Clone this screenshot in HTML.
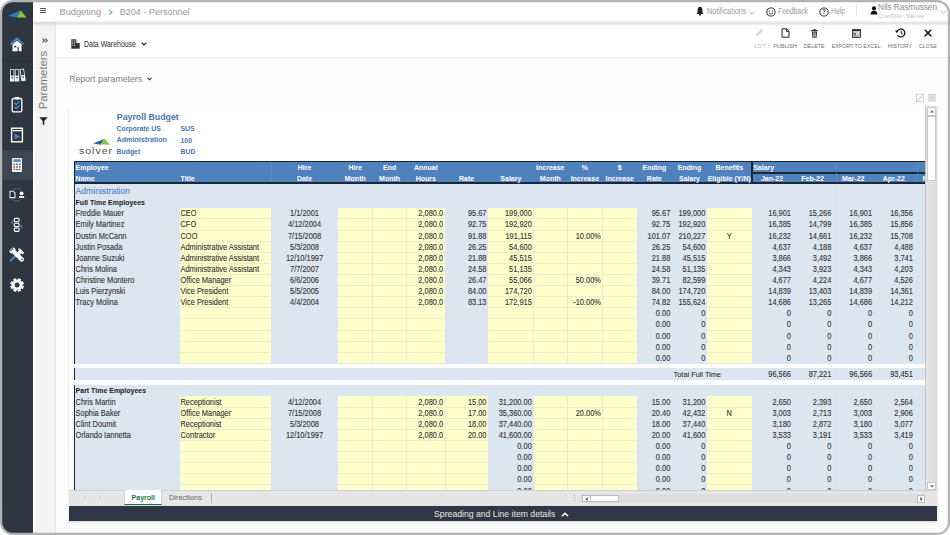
<!DOCTYPE html><html><head><meta charset="utf-8"><style>
*{margin:0;padding:0;box-sizing:border-box}
html,body{width:950px;height:535px;overflow:hidden;background:#fff;font-family:"Liberation Sans", sans-serif}
.ab{position:absolute}
.t{position:absolute;white-space:nowrap;line-height:1}
svg{position:absolute;overflow:visible}
.g{-webkit-text-stroke:0.1px currentColor;transform:scaleY(1.1);transform-origin:0 6.3px}
.gb{font-weight:bold;transform:scaleY(1.1)}
</style></head><body>
<div class="ab" style="left:1px;top:1px;width:948px;height:533px;border-radius:12px;overflow:hidden;background:#fdfdfd">
<div class="ab" style="left:-1px;top:-1px;width:950px;height:535px">
<div class="ab" style="left:0;top:0;width:33.6px;height:535px;background:#2e3641;border-right:0.6px solid #1f252d"></div>
<div class="ab" style="left:0;top:150px;width:33px;height:30px;background:#3d4753"></div>
<div class="ab" style="left:0;top:59.5px;width:33px;height:1px;background:#28303a"></div>
<svg style="left:0;top:0" width="33" height="30"><polygon points="8,16 20,10.5 17.3,17.5" fill="#2f7bbf"/><polygon points="17.3,17.5 20.5,10.3 26.5,17.5" fill="#8cc63f"/></svg>
<svg style="left:9px;top:37px" width="16" height="15" viewBox="0 0 16 15">
<polyline points="1.5,7.5 8,1.5 14.5,7.5" fill="none" stroke="#4a86c5" stroke-width="1.8"/>
<path d="M3.5,7.5 L8,3.4 L12.5,7.5 L12.5,14.3 L9.8,14.3 L9.8,10 L8.6,10 L8.6,14.3 L3.5,14.3 Z" fill="#fff"/>
<rect x="4.8" y="9" width="2.6" height="1.3" fill="#2e3641"/>
</svg>
<svg style="left:4px;top:64px" width="26" height="22" viewBox="4 64 26 22">
<g>
<rect x="10" y="69.2" width="4.4" height="12.3" fill="#f2f2f2"/>
<rect x="10.8" y="70" width="2.8" height="5.6" fill="#22344b"/>
<rect x="11.6" y="76.9" width="1.4" height="1.5" fill="#3b3b3b"/>
<rect x="14.8" y="69.2" width="4.4" height="12.3" fill="#f2f2f2"/>
<rect x="15.6" y="70" width="2.8" height="5.6" fill="#22344b"/>
<rect x="16.4" y="76.9" width="1.4" height="1.5" fill="#3b3b3b"/>
<g transform="rotate(-9 19.4 69.4)">
<rect x="19.6" y="69.2" width="4.4" height="12.3" fill="#f2f2f2"/>
<rect x="20.4" y="70" width="2.8" height="5.6" fill="#22344b"/>
<rect x="21.2" y="76.9" width="1.4" height="1.5" fill="#3b3b3b"/>
</g>
</g>
</svg>
<svg style="left:11px;top:96px" width="12" height="17" viewBox="0 0 12 17">
<rect x="1.2" y="2.5" width="9.6" height="13.3" rx="1.3" fill="none" stroke="#fff" stroke-width="1.3"/>
<rect x="3.8" y="1" width="4.4" height="2.6" rx="0.8" fill="#fff"/>
<rect x="2.6" y="4" width="6.8" height="10.4" fill="#25364d"/>
<polyline points="3.6,7 5.2,8.6 8.4,5.4" fill="none" stroke="#5b9be0" stroke-width="1.1"/>
<polyline points="3.6,11 5.2,12.6 8.4,9.4" fill="none" stroke="#5b9be0" stroke-width="1.1"/>
</svg>
<svg style="left:10px;top:127px" width="14" height="16" viewBox="0 0 14 16">
<rect x="1.6" y="1.2" width="10.8" height="13.6" fill="none" stroke="#fff" stroke-width="1.4"/>
<rect x="2.5" y="3" width="9" height="1.3" fill="#fff"/>
<polygon points="4.5,6.5 10,9.5 4.5,12.5" fill="#4a86c5"/>
</svg>
<svg style="left:11px;top:157px" width="12" height="16" viewBox="0 0 12 16">
<rect x="1" y="1" width="10" height="14" rx="1.2" fill="#fff"/>
<rect x="2.2" y="2.2" width="7.6" height="2.8" fill="#5a8fcf"/>
<g fill="#3d4753"><rect x="2.5" y="6.6" width="1.6" height="1.4"/><rect x="5.2" y="6.6" width="1.6" height="1.4"/><rect x="7.9" y="6.6" width="1.6" height="1.4"/>
<rect x="2.5" y="9.2" width="1.6" height="1.4"/><rect x="5.2" y="9.2" width="1.6" height="1.4"/><rect x="7.9" y="9.2" width="1.6" height="1.4"/>
<rect x="2.5" y="11.8" width="1.6" height="1.4"/><rect x="5.2" y="11.8" width="1.6" height="1.4"/><rect x="7.9" y="11.8" width="1.6" height="1.4"/></g>
</svg>
<svg style="left:4px;top:182px" width="26" height="26" viewBox="4 182 26 26">
<circle cx="16.9" cy="194.8" r="6.4" fill="none" stroke="#3f6d9c" stroke-width="0.9"/>
<rect x="8.5" y="190" width="7.6" height="9" fill="#2e3641"/>
<rect x="18" y="190" width="7" height="9" fill="#2e3641"/>
<path d="M10,191.2 L13.2,191.2 L15,193 L15,197.6 L10,197.6 Z" fill="none" stroke="#e8e8e8" stroke-width="1.1"/>
<path d="M11.6,192.6 L11.6,196.4 L13.4,196.4" fill="none" stroke="#111" stroke-width="0.7"/>
<circle cx="21.6" cy="193.3" r="1.9" fill="#fff"/>
<rect x="19" y="196.1" width="5.2" height="2" rx="0.7" fill="#fff"/>
</svg>
<svg style="left:4px;top:210px" width="26" height="30" viewBox="4 210 26 30">
<rect x="14.3" y="218.4" width="4.8" height="3.4" rx="1.1" fill="none" stroke="#fff" stroke-width="1.1"/>
<rect x="14.3" y="223.2" width="4.8" height="3.4" rx="1.1" fill="none" stroke="#fff" stroke-width="1.1"/>
<rect x="14.3" y="228" width="4.8" height="3.4" rx="1.1" fill="none" stroke="#fff" stroke-width="1.1"/>
<polyline points="13,220.6 11.2,222.4 13,224.2" fill="none" stroke="#4a86c5" stroke-width="0.9"/>
<line x1="11.4" y1="222.4" x2="13.6" y2="222.4" stroke="#4a86c5" stroke-width="0.8"/>
<polyline points="20.6,224.8 22.4,226.6 20.6,228.4" fill="none" stroke="#4a86c5" stroke-width="0.9"/>
<line x1="19.8" y1="226.6" x2="22.2" y2="226.6" stroke="#4a86c5" stroke-width="0.8"/>
</svg>
<svg style="left:4px;top:244px" width="26" height="22" viewBox="4 244 26 22">
<path d="M10.6,260.8 L16.6,254.8" stroke="#4a86c5" stroke-width="2" stroke-linecap="round"/>
<path d="M16,253.4 L19.2,250.2 L17.8,248.8 L20,248.6 L24.2,252.8 L22.6,254.4 L21.4,253.2 L18,256.6 Z" fill="#fff"/>
<path d="M9.6,250.6 Q10,248.2 12.6,248.6 L11.4,250.4 L12.4,251.6 L14.2,250.4 Q14.6,252.8 13,253.4 L20.4,260.4 Q21.6,261.6 22.8,260.4 Q23.8,259.2 22.6,258.2 L15.2,251.2 Q13.2,249 10.6,249.4" fill="#fff"/>
<path d="M9.4,250.2 Q9.2,253.6 12.6,253.6 L20.2,261 Q22,262.6 23.4,261 Q24.8,259.4 23.2,257.8 L15.6,250.4 Q15.8,247 12.4,247.6 L13.6,249.4 L12.2,251.2 L10.6,250.8 Z" fill="#fff"/>
<circle cx="22" cy="259.6" r="0.8" fill="#2e3641"/>
</svg>
<svg style="left:4px;top:274px" width="26" height="22" viewBox="4 274 26 22"><path d="M23.98,286.37 L22.87,289.07 L20.75,288.52 L20.52,288.75 L21.07,290.87 L18.37,291.98 L17.26,290.10 L16.94,290.10 L15.83,291.98 L13.13,290.87 L13.68,288.75 L13.45,288.52 L11.33,289.07 L10.22,286.37 L12.10,285.26 L12.10,284.94 L10.22,283.83 L11.33,281.13 L13.45,281.68 L13.68,281.45 L13.13,279.33 L15.83,278.22 L16.94,280.10 L17.26,280.10 L18.37,278.22 L21.07,279.33 L20.52,281.45 L20.75,281.68 L22.87,281.13 L23.98,283.83 L22.10,284.94 L22.10,285.26 Z" fill="#fff"/><circle cx="17.1" cy="285.1" r="2.5" fill="#2e3641"/></svg>
<div class="ab" style="left:33px;top:0;width:917px;height:21.5px;background:#fff;box-shadow:0 1px 1.5px rgba(0,0,0,0.10)"></div>
<div class="ab" style="left:40.4px;top:8.2px;width:5.6px;height:1px;background:#555"></div>
<div class="ab" style="left:40.4px;top:10.3px;width:5.6px;height:1px;background:#555"></div>
<div class="ab" style="left:40.4px;top:12.4px;width:5.6px;height:1px;background:#555"></div>
<div class="t" style="left:59.50px;top:8.06px;font-size:9.26px;color:#999999;font-weight:normal;">Budgeting</div>
<svg style="left:106px;top:8px" width="9" height="9" viewBox="106 8 9 9"><polyline points="108.9,10.4 112.3,12.4 108.9,14.4" fill="none" stroke="#4a8fca" stroke-width="1"/></svg>
<div class="t" style="left:119.70px;top:8.24px;font-size:9.05px;color:#999999;font-weight:normal;">B204 - Personnel</div>
<svg style="left:696px;top:6px" width="8" height="10" viewBox="0 0 8 10"><path d="M4,0.8 Q6.3,0.9 6.4,4 L6.6,6.8 L7.6,8 L0.4,8 L1.4,6.8 L1.6,4 Q1.7,0.9 4,0.8 Z" fill="#222"/><circle cx="4" cy="8.8" r="1" fill="#222"/></svg>
<div class="t" style="left:707.00px;top:7.02px;font-size:8.6px;color:#9a9a9a;font-weight:normal;transform:scaleX(0.842);transform-origin:0 0">Notifications</div>
<svg style="left:748.5px;top:10.5px" width="6" height="4" viewBox="0 0 6 4"><polyline points="0.6,0.8 3,3.2 5.4,0.8" fill="none" stroke="#999" stroke-width="0.9"/></svg>
<svg style="left:765.5px;top:6.5px" width="10" height="10" viewBox="0 0 10 10"><circle cx="5" cy="5" r="4.1" fill="none" stroke="#333" stroke-width="1"/><circle cx="3.5" cy="4" r="0.7" fill="#333"/><circle cx="6.5" cy="4" r="0.7" fill="#333"/><path d="M2.8,6 Q5,8 7.2,6" fill="none" stroke="#333" stroke-width="0.9"/></svg>
<div class="t" style="left:777.70px;top:7.02px;font-size:8.6px;color:#9a9a9a;font-weight:normal;transform:scaleX(0.795);transform-origin:0 0">Feedback</div>
<svg style="left:818.8px;top:6.5px" width="10" height="10" viewBox="0 0 10 10"><circle cx="5" cy="5" r="4.1" fill="none" stroke="#333" stroke-width="1"/><text x="5" y="7.4" font-size="6.5" font-weight="bold" text-anchor="middle" fill="#333" font-family="Liberation Sans">?</text></svg>
<div class="t" style="left:831.00px;top:7.02px;font-size:8.6px;color:#9a9a9a;font-weight:normal;transform:scaleX(0.79);transform-origin:0 0">Help</div>
<div class="ab" style="left:856.3px;top:5px;width:0.8px;height:11px;background:#e2e2e2"></div>
<svg style="left:869.5px;top:6px" width="8" height="9" viewBox="0 0 8 9"><circle cx="4" cy="2.4" r="2.1" fill="#111"/><path d="M0.6,8.6 Q0.6,4.8 4,4.8 Q7.4,4.8 7.4,8.6 Z" fill="#111"/></svg>
<div class="t" style="left:878.00px;top:3.88px;font-size:8.17px;color:#8a8a8a;font-weight:normal;">Nils Rasmussen</div>
<div class="t" style="left:878.00px;top:13.83px;font-size:5.4px;color:#bdbdbd;font-weight:normal;">C<span style="font-size:4.2px">ORP</span>D<span style="font-size:4.2px">EMO</span> M<span style="font-size:4.2px">ASTER</span></div>
<svg style="left:940px;top:10px" width="7" height="4" viewBox="0 0 7 4"><polyline points="0.6,0.6 3.5,3.2 6.4,0.6" fill="none" stroke="#aaa" stroke-width="0.8"/></svg>
<div class="ab" style="left:33px;top:21.5px;width:23px;height:514px;background:#fff"></div>
<div class="ab" style="left:34.8px;top:21.5px;width:21.2px;height:514px;background:#f3f3f3;border-right:0.8px solid #e9e9e9"></div>
<svg style="left:41.8px;top:37.8px" width="6" height="5" viewBox="0 0 6 5"><polyline points="0.6,0.6 2.5,2.5 0.6,4.4" fill="none" stroke="#555" stroke-width="1.2"/><polyline points="3.3,0.6 5.2,2.5 3.3,4.4" fill="none" stroke="#555" stroke-width="1.2"/></svg>
<div class="t" style="left:43.8px;top:79px;font-size:11.34px;color:#7a7a7a;transform:translate(-50%,-50%) rotate(-90deg);transform-origin:50% 50%;left:43.8px;top:80px">Parameters</div>
<svg style="left:39px;top:117.3px" width="9" height="8" viewBox="0 0 9 8"><path d="M0.3,0.3 L8.7,0.3 L5.3,4 L5.3,7.7 L3.7,7.7 L3.7,4 Z" fill="#222"/></svg>
<div class="ab" style="left:56px;top:21.5px;width:894px;height:36.3px;background:#fff;border-bottom:0.8px solid #efefef"></div>
<div class="ab" style="left:33px;top:21px;width:917px;height:4.5px;background:linear-gradient(to bottom, rgba(0,0,0,0.02), rgba(0,0,0,0.12) 40%, rgba(0,0,0,0.0))"></div>
<svg style="left:70.5px;top:38.8px" width="9" height="10" viewBox="0 0 9 10"><rect x="0.3" y="0.3" width="5" height="9.4" fill="#333"/><rect x="5" y="4" width="3.7" height="5.7" fill="#333"/><g fill="#fff"><rect x="1.3" y="1.5" width="1" height="1"/><rect x="3.2" y="1.5" width="1" height="1"/><rect x="1.3" y="3.6" width="1" height="1"/><rect x="3.2" y="3.6" width="1" height="1"/><rect x="1.3" y="5.7" width="1" height="1"/><rect x="3.2" y="5.7" width="1" height="1"/></g></svg>
<div class="t" style="left:83.70px;top:40.32px;font-size:8.6px;color:#2a2a2a;font-weight:normal;transform:scaleX(0.81);transform-origin:0 0">Data Warehouse</div>
<svg style="left:141px;top:42px" width="6" height="4" viewBox="0 0 6 4"><polyline points="0.7,0.7 3,3 5.3,0.7" fill="none" stroke="#222" stroke-width="1.2"/></svg>
<div class="t" style="left:610.00px;width:300px;text-align:center;top:43.81px;font-size:5.3px;color:#c9c9c9;font-weight:normal;">EDIT</div>
<div class="t" style="left:635.00px;width:300px;text-align:center;top:43.60px;font-size:5.55px;color:#6f6f6f;font-weight:normal;">PUBLISH</div>
<div class="t" style="left:664.20px;width:300px;text-align:center;top:43.73px;font-size:5.4px;color:#6f6f6f;font-weight:normal;">DELETE</div>
<div class="t" style="left:706.20px;width:300px;text-align:center;top:43.83px;font-size:5.28px;color:#6f6f6f;font-weight:normal;">EXPORT TO EXCEL</div>
<div class="t" style="left:749.80px;width:300px;text-align:center;top:43.67px;font-size:5.47px;color:#6f6f6f;font-weight:normal;">HISTORY</div>
<div class="t" style="left:777.80px;width:300px;text-align:center;top:43.78px;font-size:5.34px;color:#6f6f6f;font-weight:normal;">CLOSE</div>
<svg style="left:755px;top:28px" width="9" height="9" viewBox="0 0 9 9"><path d="M1,8 L1.4,6.2 L6.6,1 L8,2.4 L2.8,7.6 Z" fill="#d0d0d0"/></svg>
<svg style="left:780.5px;top:28px" width="9" height="10" viewBox="0 0 9 10"><path d="M1,0.8 L5.6,0.8 L8,3.2 L8,9.2 L1,9.2 Z" fill="none" stroke="#222" stroke-width="1"/><path d="M5.4,0.8 L5.4,3.4 L8,3.4" fill="none" stroke="#222" stroke-width="0.9"/></svg>
<svg style="left:810.8px;top:28.5px" width="7" height="9" viewBox="0 0 7 9"><rect x="0.2" y="1" width="6.6" height="1.1" fill="#333"/><rect x="2.3" y="0.1" width="2.4" height="1" fill="#333"/><path d="M0.9,2.6 L6.1,2.6 L5.6,8.8 L1.4,8.8 Z" fill="#333"/><g fill="#fff"><rect x="2.2" y="3.4" width="0.5" height="4.6"/><rect x="3.25" y="3.4" width="0.5" height="4.6"/><rect x="4.3" y="3.4" width="0.5" height="4.6"/></g></svg>
<svg style="left:852px;top:28.5px" width="9" height="9" viewBox="0 0 9 9"><rect x="0.5" y="0.5" width="8" height="8" fill="none" stroke="#333" stroke-width="0.9"/><rect x="0.5" y="0.5" width="8" height="1.6" fill="#333"/><rect x="1.6" y="3" width="5.8" height="4.6" fill="none" stroke="#555" stroke-width="0.5"/><path d="M2.3,3.9 L4.1,6.7 M4.1,3.9 L2.3,6.7" stroke="#222" stroke-width="0.8"/><rect x="4.8" y="5.6" width="2" height="0.7" fill="#333"/></svg>
<svg style="left:894.5px;top:28px" width="11" height="10" viewBox="0 0 11 10"><path d="M2.2,3.2 A4,4 0 1 1 2.4,7" fill="none" stroke="#111" stroke-width="1.3"/><polygon points="0,2.6 3.6,2.6 1.8,5.2" fill="#111"/><polyline points="6.2,2.8 6.2,5.2 7.8,6.2" fill="none" stroke="#111" stroke-width="1"/></svg>
<svg style="left:923.8px;top:28.8px" width="8" height="8" viewBox="0 0 8 8"><path d="M0.8,0.8 L7.2,7.2 M7.2,0.8 L0.8,7.2" stroke="#111" stroke-width="1.6"/></svg>
<div class="t" style="left:69.20px;top:74.69px;font-size:8.75px;color:#808080;font-weight:normal;">Report parameters</div>
<svg style="left:146.8px;top:77px" width="5" height="4" viewBox="0 0 5 4"><polyline points="0.6,0.8 2.5,2.8 4.4,0.8" fill="none" stroke="#333" stroke-width="1.1"/></svg>
<div class="ab" style="left:68.8px;top:106.4px;width:868px;height:399px;background:#fff;box-shadow:0 0.5px 2px rgba(0,0,0,0.16)"></div>
<svg style="left:916px;top:94px" width="8" height="8" viewBox="0 0 8 8"><rect x="0.4" y="0.4" width="7.2" height="7.2" fill="none" stroke="#cfcfcf" stroke-width="0.8"/><path d="M3,5 L6.2,1.8" stroke="#bbb" stroke-width="1"/><rect x="0.4" y="5.3" width="2.3" height="2.3" fill="none" stroke="#cfcfcf" stroke-width="0.6"/></svg>
<svg style="left:928px;top:94px" width="8" height="8" viewBox="0 0 8 8"><rect x="0" y="0" width="8" height="8" fill="#e6e6e6"/><rect x="0" y="0" width="8" height="1.2" fill="#cfcfcf"/><path d="M2.7,1 V8 M5.3,1 V8 M0,3.5 H8 M0,6 H8" stroke="#d2d2d2" stroke-width="0.5"/></svg>
<div class="t" style="left:116.80px;top:112.86px;font-size:8.79px;color:#4a76b0;font-weight:bold;">Payroll Budget</div>
<div class="t" style="left:116.50px;top:126.46px;font-size:6.9px;color:#4a76b0;font-weight:bold;transform:scaleY(1.08);transform-origin:0 5.84px">Corporate US</div>
<div class="t" style="left:180.50px;top:126.46px;font-size:6.9px;color:#4a76b0;font-weight:bold;transform:scaleY(1.08);transform-origin:0 5.84px">SUS</div>
<div class="t" style="left:116.50px;top:137.34px;font-size:7.16px;color:#4a76b0;font-weight:bold;transform:scaleY(1.05);transform-origin:0 6.06px">Administration</div>
<div class="t" style="left:180.50px;top:137.56px;font-size:6.9px;color:#4a76b0;font-weight:bold;transform:scaleY(1.08);transform-origin:0 5.84px">100</div>
<div class="t" style="left:116.50px;top:148.66px;font-size:6.9px;color:#4a76b0;font-weight:bold;transform:scaleY(1.08);transform-origin:0 5.84px">Budget</div>
<div class="t" style="left:180.50px;top:148.66px;font-size:6.9px;color:#4a76b0;font-weight:bold;transform:scaleY(1.08);transform-origin:0 5.84px">BUD</div>
<svg style="left:90px;top:137px" width="22" height="9" viewBox="0 0 22 9"><polygon points="3.1,6.4 14.4,1.8 10.7,7.8" fill="#1f66a6"/><polygon points="11,7.6 14.6,1.8 20.1,7.8" fill="#8dc63f"/></svg>
<div class="t" style="left:79.00px;top:145.03px;font-size:10.6px;color:#505050;font-weight:normal;letter-spacing:0.95px;transform:scaleY(0.92);transform-origin:0 9px">solver</div>
<div class="ab" style="left:73.5px;top:160.8px;width:851.5px;height:329.5px;overflow:hidden;background:#fff">
<div class="ab" style="left:0.00px;top:0.10px;width:851.50px;height:23.30px;background:#1b2838;"></div>
<div class="ab" style="left:1.90px;top:1.50px;width:675.50px;height:20.10px;background:#4f81bd;"></div>
<div class="ab" style="left:679.00px;top:1.50px;width:172.50px;height:10.00px;background:#4f81bd;"></div>
<div class="ab" style="left:679.00px;top:12.80px;width:172.50px;height:8.80px;background:#4f81bd;"></div>
<div class="ab" style="left:197.30px;top:2.20px;width:0.60px;height:19.40px;background:#5a8bc4;"></div>
<div class="ab" style="left:762.60px;top:2.20px;width:0.60px;height:9.20px;background:#5a8bc4;"></div>
<div class="ab" style="left:762.60px;top:12.60px;width:0.60px;height:9.00px;background:#5a8bc4;"></div>
<div class="ab" style="left:843.40px;top:2.20px;width:0.60px;height:9.20px;background:#5a8bc4;"></div>
<div class="ab" style="left:843.40px;top:12.60px;width:0.60px;height:9.00px;background:#5a8bc4;"></div>
<div class="t gb" style="left:2.10px;top:3.57px;font-size:7.0px;color:#ffffff;transform-origin:0 5.93px">Employee</div>
<div class="t gb" style="left:2.10px;top:14.67px;font-size:7.0px;color:#ffffff;transform-origin:0 5.93px">Name</div>
<div class="t gb" style="left:107.00px;top:14.67px;font-size:7.0px;color:#ffffff;transform-origin:0 5.93px">Title</div>
<div class="t gb" style="left:131.00px;width:200px;text-align:center;top:3.57px;font-size:7.0px;color:#ffffff;transform-origin:0 5.93px">Hire</div>
<div class="t gb" style="left:131.00px;width:200px;text-align:center;top:14.67px;font-size:7.0px;color:#ffffff;transform-origin:0 5.93px">Date</div>
<div class="t gb" style="left:181.75px;width:200px;text-align:center;top:3.57px;font-size:7.0px;color:#ffffff;transform-origin:0 5.93px">Hire</div>
<div class="t gb" style="left:181.75px;width:200px;text-align:center;top:14.67px;font-size:7.0px;color:#ffffff;transform-origin:0 5.93px">Month</div>
<div class="t gb" style="left:216.10px;width:200px;text-align:center;top:3.57px;font-size:7.0px;color:#ffffff;transform-origin:0 5.93px">End</div>
<div class="t gb" style="left:216.10px;width:200px;text-align:center;top:14.67px;font-size:7.0px;color:#ffffff;transform-origin:0 5.93px">Month</div>
<div class="t gb" style="left:252.25px;width:200px;text-align:center;top:3.57px;font-size:7.0px;color:#ffffff;transform-origin:0 5.93px">Annual</div>
<div class="t gb" style="left:252.25px;width:200px;text-align:center;top:14.67px;font-size:7.0px;color:#ffffff;transform-origin:0 5.93px">Hours</div>
<div class="t gb" style="left:293.05px;width:200px;text-align:center;top:14.67px;font-size:7.0px;color:#ffffff;transform-origin:0 5.93px">Rate</div>
<div class="t gb" style="left:337.35px;width:200px;text-align:center;top:14.67px;font-size:7.0px;color:#ffffff;transform-origin:0 5.93px">Salary</div>
<div class="t gb" style="left:376.80px;width:200px;text-align:center;top:3.57px;font-size:7.0px;color:#ffffff;transform-origin:0 5.93px">Increase</div>
<div class="t gb" style="left:376.80px;width:200px;text-align:center;top:14.67px;font-size:7.0px;color:#ffffff;transform-origin:0 5.93px">Month</div>
<div class="t gb" style="left:411.35px;width:200px;text-align:center;top:3.57px;font-size:7.0px;color:#ffffff;transform-origin:0 5.93px">%</div>
<div class="t gb" style="left:411.35px;width:200px;text-align:center;top:14.67px;font-size:7.0px;color:#ffffff;transform-origin:0 5.93px">Increase</div>
<div class="t gb" style="left:446.25px;width:200px;text-align:center;top:3.57px;font-size:7.0px;color:#ffffff;transform-origin:0 5.93px">$</div>
<div class="t gb" style="left:446.25px;width:200px;text-align:center;top:14.67px;font-size:7.0px;color:#ffffff;transform-origin:0 5.93px">Increase</div>
<div class="t gb" style="left:480.95px;width:200px;text-align:center;top:3.57px;font-size:7.0px;color:#ffffff;transform-origin:0 5.93px">Ending</div>
<div class="t gb" style="left:480.95px;width:200px;text-align:center;top:14.67px;font-size:7.0px;color:#ffffff;transform-origin:0 5.93px">Rate</div>
<div class="t gb" style="left:516.00px;width:200px;text-align:center;top:3.57px;font-size:7.0px;color:#ffffff;transform-origin:0 5.93px">Ending</div>
<div class="t gb" style="left:516.00px;width:200px;text-align:center;top:14.67px;font-size:7.0px;color:#ffffff;transform-origin:0 5.93px">Salary</div>
<div class="t gb" style="left:555.75px;width:200px;text-align:center;top:3.57px;font-size:7.0px;color:#ffffff;transform-origin:0 5.93px">Benefits</div>
<div class="t gb" style="left:555.75px;width:200px;text-align:center;top:14.67px;font-size:7.0px;color:#ffffff;transform-origin:0 5.93px">Eligible (Y/N)</div>
<div class="t gb" style="left:679.70px;top:3.57px;font-size:7.0px;color:#ffffff;transform-origin:0 5.93px">Salary</div>
<div class="t gb" style="left:598.50px;width:200px;text-align:center;top:14.67px;font-size:7.0px;color:#ffffff;transform-origin:0 5.93px">Jan-22</div>
<div class="t gb" style="left:639.10px;width:200px;text-align:center;top:14.67px;font-size:7.0px;color:#ffffff;transform-origin:0 5.93px">Feb-22</div>
<div class="t gb" style="left:679.70px;width:200px;text-align:center;top:14.67px;font-size:7.0px;color:#ffffff;transform-origin:0 5.93px">Mar-22</div>
<div class="t gb" style="left:720.30px;width:200px;text-align:center;top:14.67px;font-size:7.0px;color:#ffffff;transform-origin:0 5.93px">Apr-22</div>
<div class="t gb" style="left:760.90px;width:200px;text-align:center;top:14.67px;font-size:7.0px;color:#ffffff;transform-origin:0 5.93px">May-22</div>
<div class="ab" style="left:0.00px;top:23.60px;width:851.50px;height:305.90px;background:#dce6f1;"></div>
<div class="ab" style="left:0.00px;top:23.60px;width:1.90px;height:305.90px;background:#1b2838;"></div>
<div class="ab" style="left:762.60px;top:23.60px;width:0.60px;height:305.90px;background:#d8e2ed;"></div>
<div class="ab" style="left:843.40px;top:23.60px;width:0.60px;height:305.90px;background:#d8e2ed;"></div>
<div class="ab" style="left:0.00px;top:203.20px;width:851.50px;height:4.40px;background:#ffffff;"></div>
<div class="ab" style="left:0.00px;top:219.00px;width:851.50px;height:5.00px;background:#ffffff;"></div>
<div class="ab" style="left:106.20px;top:47.00px;width:91.40px;height:155.50px;background:#ffffcc;"></div>
<div class="ab" style="left:264.40px;top:47.00px;width:34.70px;height:155.50px;background:#ffffcc;"></div>
<div class="ab" style="left:299.10px;top:47.00px;width:34.00px;height:155.50px;background:#ffffcc;"></div>
<div class="ab" style="left:333.10px;top:47.00px;width:38.30px;height:155.50px;background:#ffffcc;"></div>
<div class="ab" style="left:414.70px;top:47.00px;width:45.30px;height:155.50px;background:#ffffcc;"></div>
<div class="ab" style="left:460.00px;top:47.00px;width:33.60px;height:155.50px;background:#ffffcc;"></div>
<div class="ab" style="left:493.60px;top:47.00px;width:35.50px;height:155.50px;background:#ffffcc;"></div>
<div class="ab" style="left:529.10px;top:47.00px;width:34.30px;height:155.50px;background:#ffffcc;"></div>
<div class="ab" style="left:633.50px;top:47.00px;width:44.50px;height:155.50px;background:#ffffcc;"></div>
<div class="ab" style="left:298.70px;top:47.00px;width:0.80px;height:155.50px;background:#ecedca;"></div>
<div class="ab" style="left:332.70px;top:47.00px;width:0.80px;height:155.50px;background:#ecedca;"></div>
<div class="ab" style="left:459.60px;top:47.00px;width:0.80px;height:155.50px;background:#ecedca;"></div>
<div class="ab" style="left:493.20px;top:47.00px;width:0.80px;height:155.50px;background:#ecedca;"></div>
<div class="ab" style="left:528.70px;top:47.00px;width:0.80px;height:155.50px;background:#ecedca;"></div>
<div class="ab" style="left:106.20px;top:57.66px;width:91.40px;height:0.90px;background:#ecedca;"></div>
<div class="ab" style="left:264.40px;top:57.66px;width:34.70px;height:0.90px;background:#ecedca;"></div>
<div class="ab" style="left:299.10px;top:57.66px;width:34.00px;height:0.90px;background:#ecedca;"></div>
<div class="ab" style="left:333.10px;top:57.66px;width:38.30px;height:0.90px;background:#ecedca;"></div>
<div class="ab" style="left:414.70px;top:57.66px;width:45.30px;height:0.90px;background:#ecedca;"></div>
<div class="ab" style="left:460.00px;top:57.66px;width:33.60px;height:0.90px;background:#ecedca;"></div>
<div class="ab" style="left:493.60px;top:57.66px;width:35.50px;height:0.90px;background:#ecedca;"></div>
<div class="ab" style="left:529.10px;top:57.66px;width:34.30px;height:0.90px;background:#ecedca;"></div>
<div class="ab" style="left:633.50px;top:57.66px;width:44.50px;height:0.90px;background:#ecedca;"></div>
<div class="ab" style="left:106.20px;top:68.76px;width:91.40px;height:0.90px;background:#ecedca;"></div>
<div class="ab" style="left:264.40px;top:68.76px;width:34.70px;height:0.90px;background:#ecedca;"></div>
<div class="ab" style="left:299.10px;top:68.76px;width:34.00px;height:0.90px;background:#ecedca;"></div>
<div class="ab" style="left:333.10px;top:68.76px;width:38.30px;height:0.90px;background:#ecedca;"></div>
<div class="ab" style="left:414.70px;top:68.76px;width:45.30px;height:0.90px;background:#ecedca;"></div>
<div class="ab" style="left:460.00px;top:68.76px;width:33.60px;height:0.90px;background:#ecedca;"></div>
<div class="ab" style="left:493.60px;top:68.76px;width:35.50px;height:0.90px;background:#ecedca;"></div>
<div class="ab" style="left:529.10px;top:68.76px;width:34.30px;height:0.90px;background:#ecedca;"></div>
<div class="ab" style="left:633.50px;top:68.76px;width:44.50px;height:0.90px;background:#ecedca;"></div>
<div class="ab" style="left:106.20px;top:79.87px;width:91.40px;height:0.90px;background:#ecedca;"></div>
<div class="ab" style="left:264.40px;top:79.87px;width:34.70px;height:0.90px;background:#ecedca;"></div>
<div class="ab" style="left:299.10px;top:79.87px;width:34.00px;height:0.90px;background:#ecedca;"></div>
<div class="ab" style="left:333.10px;top:79.87px;width:38.30px;height:0.90px;background:#ecedca;"></div>
<div class="ab" style="left:414.70px;top:79.87px;width:45.30px;height:0.90px;background:#ecedca;"></div>
<div class="ab" style="left:460.00px;top:79.87px;width:33.60px;height:0.90px;background:#ecedca;"></div>
<div class="ab" style="left:493.60px;top:79.87px;width:35.50px;height:0.90px;background:#ecedca;"></div>
<div class="ab" style="left:529.10px;top:79.87px;width:34.30px;height:0.90px;background:#ecedca;"></div>
<div class="ab" style="left:633.50px;top:79.87px;width:44.50px;height:0.90px;background:#ecedca;"></div>
<div class="ab" style="left:106.20px;top:90.98px;width:91.40px;height:0.90px;background:#ecedca;"></div>
<div class="ab" style="left:264.40px;top:90.98px;width:34.70px;height:0.90px;background:#ecedca;"></div>
<div class="ab" style="left:299.10px;top:90.98px;width:34.00px;height:0.90px;background:#ecedca;"></div>
<div class="ab" style="left:333.10px;top:90.98px;width:38.30px;height:0.90px;background:#ecedca;"></div>
<div class="ab" style="left:414.70px;top:90.98px;width:45.30px;height:0.90px;background:#ecedca;"></div>
<div class="ab" style="left:460.00px;top:90.98px;width:33.60px;height:0.90px;background:#ecedca;"></div>
<div class="ab" style="left:493.60px;top:90.98px;width:35.50px;height:0.90px;background:#ecedca;"></div>
<div class="ab" style="left:529.10px;top:90.98px;width:34.30px;height:0.90px;background:#ecedca;"></div>
<div class="ab" style="left:633.50px;top:90.98px;width:44.50px;height:0.90px;background:#ecedca;"></div>
<div class="ab" style="left:106.20px;top:102.09px;width:91.40px;height:0.90px;background:#ecedca;"></div>
<div class="ab" style="left:264.40px;top:102.09px;width:34.70px;height:0.90px;background:#ecedca;"></div>
<div class="ab" style="left:299.10px;top:102.09px;width:34.00px;height:0.90px;background:#ecedca;"></div>
<div class="ab" style="left:333.10px;top:102.09px;width:38.30px;height:0.90px;background:#ecedca;"></div>
<div class="ab" style="left:414.70px;top:102.09px;width:45.30px;height:0.90px;background:#ecedca;"></div>
<div class="ab" style="left:460.00px;top:102.09px;width:33.60px;height:0.90px;background:#ecedca;"></div>
<div class="ab" style="left:493.60px;top:102.09px;width:35.50px;height:0.90px;background:#ecedca;"></div>
<div class="ab" style="left:529.10px;top:102.09px;width:34.30px;height:0.90px;background:#ecedca;"></div>
<div class="ab" style="left:633.50px;top:102.09px;width:44.50px;height:0.90px;background:#ecedca;"></div>
<div class="ab" style="left:106.20px;top:113.19px;width:91.40px;height:0.90px;background:#ecedca;"></div>
<div class="ab" style="left:264.40px;top:113.19px;width:34.70px;height:0.90px;background:#ecedca;"></div>
<div class="ab" style="left:299.10px;top:113.19px;width:34.00px;height:0.90px;background:#ecedca;"></div>
<div class="ab" style="left:333.10px;top:113.19px;width:38.30px;height:0.90px;background:#ecedca;"></div>
<div class="ab" style="left:414.70px;top:113.19px;width:45.30px;height:0.90px;background:#ecedca;"></div>
<div class="ab" style="left:460.00px;top:113.19px;width:33.60px;height:0.90px;background:#ecedca;"></div>
<div class="ab" style="left:493.60px;top:113.19px;width:35.50px;height:0.90px;background:#ecedca;"></div>
<div class="ab" style="left:529.10px;top:113.19px;width:34.30px;height:0.90px;background:#ecedca;"></div>
<div class="ab" style="left:633.50px;top:113.19px;width:44.50px;height:0.90px;background:#ecedca;"></div>
<div class="ab" style="left:106.20px;top:124.30px;width:91.40px;height:0.90px;background:#ecedca;"></div>
<div class="ab" style="left:264.40px;top:124.30px;width:34.70px;height:0.90px;background:#ecedca;"></div>
<div class="ab" style="left:299.10px;top:124.30px;width:34.00px;height:0.90px;background:#ecedca;"></div>
<div class="ab" style="left:333.10px;top:124.30px;width:38.30px;height:0.90px;background:#ecedca;"></div>
<div class="ab" style="left:414.70px;top:124.30px;width:45.30px;height:0.90px;background:#ecedca;"></div>
<div class="ab" style="left:460.00px;top:124.30px;width:33.60px;height:0.90px;background:#ecedca;"></div>
<div class="ab" style="left:493.60px;top:124.30px;width:35.50px;height:0.90px;background:#ecedca;"></div>
<div class="ab" style="left:529.10px;top:124.30px;width:34.30px;height:0.90px;background:#ecedca;"></div>
<div class="ab" style="left:633.50px;top:124.30px;width:44.50px;height:0.90px;background:#ecedca;"></div>
<div class="ab" style="left:106.20px;top:135.41px;width:91.40px;height:0.90px;background:#ecedca;"></div>
<div class="ab" style="left:264.40px;top:135.41px;width:34.70px;height:0.90px;background:#ecedca;"></div>
<div class="ab" style="left:299.10px;top:135.41px;width:34.00px;height:0.90px;background:#ecedca;"></div>
<div class="ab" style="left:333.10px;top:135.41px;width:38.30px;height:0.90px;background:#ecedca;"></div>
<div class="ab" style="left:414.70px;top:135.41px;width:45.30px;height:0.90px;background:#ecedca;"></div>
<div class="ab" style="left:460.00px;top:135.41px;width:33.60px;height:0.90px;background:#ecedca;"></div>
<div class="ab" style="left:493.60px;top:135.41px;width:35.50px;height:0.90px;background:#ecedca;"></div>
<div class="ab" style="left:529.10px;top:135.41px;width:34.30px;height:0.90px;background:#ecedca;"></div>
<div class="ab" style="left:633.50px;top:135.41px;width:44.50px;height:0.90px;background:#ecedca;"></div>
<div class="ab" style="left:106.20px;top:146.51px;width:91.40px;height:0.90px;background:#ecedca;"></div>
<div class="ab" style="left:264.40px;top:146.51px;width:34.70px;height:0.90px;background:#ecedca;"></div>
<div class="ab" style="left:299.10px;top:146.51px;width:34.00px;height:0.90px;background:#ecedca;"></div>
<div class="ab" style="left:333.10px;top:146.51px;width:38.30px;height:0.90px;background:#ecedca;"></div>
<div class="ab" style="left:414.70px;top:146.51px;width:45.30px;height:0.90px;background:#ecedca;"></div>
<div class="ab" style="left:460.00px;top:146.51px;width:33.60px;height:0.90px;background:#ecedca;"></div>
<div class="ab" style="left:493.60px;top:146.51px;width:35.50px;height:0.90px;background:#ecedca;"></div>
<div class="ab" style="left:529.10px;top:146.51px;width:34.30px;height:0.90px;background:#ecedca;"></div>
<div class="ab" style="left:633.50px;top:146.51px;width:44.50px;height:0.90px;background:#ecedca;"></div>
<div class="ab" style="left:106.20px;top:157.62px;width:91.40px;height:0.90px;background:#ecedca;"></div>
<div class="ab" style="left:264.40px;top:157.62px;width:34.70px;height:0.90px;background:#ecedca;"></div>
<div class="ab" style="left:299.10px;top:157.62px;width:34.00px;height:0.90px;background:#ecedca;"></div>
<div class="ab" style="left:333.10px;top:157.62px;width:38.30px;height:0.90px;background:#ecedca;"></div>
<div class="ab" style="left:414.70px;top:157.62px;width:45.30px;height:0.90px;background:#ecedca;"></div>
<div class="ab" style="left:460.00px;top:157.62px;width:33.60px;height:0.90px;background:#ecedca;"></div>
<div class="ab" style="left:493.60px;top:157.62px;width:35.50px;height:0.90px;background:#ecedca;"></div>
<div class="ab" style="left:529.10px;top:157.62px;width:34.30px;height:0.90px;background:#ecedca;"></div>
<div class="ab" style="left:633.50px;top:157.62px;width:44.50px;height:0.90px;background:#ecedca;"></div>
<div class="ab" style="left:106.20px;top:168.73px;width:91.40px;height:0.90px;background:#ecedca;"></div>
<div class="ab" style="left:264.40px;top:168.73px;width:34.70px;height:0.90px;background:#ecedca;"></div>
<div class="ab" style="left:299.10px;top:168.73px;width:34.00px;height:0.90px;background:#ecedca;"></div>
<div class="ab" style="left:333.10px;top:168.73px;width:38.30px;height:0.90px;background:#ecedca;"></div>
<div class="ab" style="left:414.70px;top:168.73px;width:45.30px;height:0.90px;background:#ecedca;"></div>
<div class="ab" style="left:460.00px;top:168.73px;width:33.60px;height:0.90px;background:#ecedca;"></div>
<div class="ab" style="left:493.60px;top:168.73px;width:35.50px;height:0.90px;background:#ecedca;"></div>
<div class="ab" style="left:529.10px;top:168.73px;width:34.30px;height:0.90px;background:#ecedca;"></div>
<div class="ab" style="left:633.50px;top:168.73px;width:44.50px;height:0.90px;background:#ecedca;"></div>
<div class="ab" style="left:106.20px;top:179.83px;width:91.40px;height:0.90px;background:#ecedca;"></div>
<div class="ab" style="left:264.40px;top:179.83px;width:34.70px;height:0.90px;background:#ecedca;"></div>
<div class="ab" style="left:299.10px;top:179.83px;width:34.00px;height:0.90px;background:#ecedca;"></div>
<div class="ab" style="left:333.10px;top:179.83px;width:38.30px;height:0.90px;background:#ecedca;"></div>
<div class="ab" style="left:414.70px;top:179.83px;width:45.30px;height:0.90px;background:#ecedca;"></div>
<div class="ab" style="left:460.00px;top:179.83px;width:33.60px;height:0.90px;background:#ecedca;"></div>
<div class="ab" style="left:493.60px;top:179.83px;width:35.50px;height:0.90px;background:#ecedca;"></div>
<div class="ab" style="left:529.10px;top:179.83px;width:34.30px;height:0.90px;background:#ecedca;"></div>
<div class="ab" style="left:633.50px;top:179.83px;width:44.50px;height:0.90px;background:#ecedca;"></div>
<div class="ab" style="left:106.20px;top:190.94px;width:91.40px;height:0.90px;background:#ecedca;"></div>
<div class="ab" style="left:264.40px;top:190.94px;width:34.70px;height:0.90px;background:#ecedca;"></div>
<div class="ab" style="left:299.10px;top:190.94px;width:34.00px;height:0.90px;background:#ecedca;"></div>
<div class="ab" style="left:333.10px;top:190.94px;width:38.30px;height:0.90px;background:#ecedca;"></div>
<div class="ab" style="left:414.70px;top:190.94px;width:45.30px;height:0.90px;background:#ecedca;"></div>
<div class="ab" style="left:460.00px;top:190.94px;width:33.60px;height:0.90px;background:#ecedca;"></div>
<div class="ab" style="left:493.60px;top:190.94px;width:35.50px;height:0.90px;background:#ecedca;"></div>
<div class="ab" style="left:529.10px;top:190.94px;width:34.30px;height:0.90px;background:#ecedca;"></div>
<div class="ab" style="left:633.50px;top:190.94px;width:44.50px;height:0.90px;background:#ecedca;"></div>
<div class="ab" style="left:106.20px;top:235.20px;width:91.40px;height:94.30px;background:#ffffcc;"></div>
<div class="ab" style="left:264.40px;top:235.20px;width:34.70px;height:94.30px;background:#ffffcc;"></div>
<div class="ab" style="left:299.10px;top:235.20px;width:34.00px;height:94.30px;background:#ffffcc;"></div>
<div class="ab" style="left:333.10px;top:235.20px;width:38.30px;height:94.30px;background:#ffffcc;"></div>
<div class="ab" style="left:371.40px;top:235.20px;width:43.30px;height:94.30px;background:#ffffcc;"></div>
<div class="ab" style="left:460.00px;top:235.20px;width:33.60px;height:94.30px;background:#ffffcc;"></div>
<div class="ab" style="left:493.60px;top:235.20px;width:35.50px;height:94.30px;background:#ffffcc;"></div>
<div class="ab" style="left:529.10px;top:235.20px;width:34.30px;height:94.30px;background:#ffffcc;"></div>
<div class="ab" style="left:633.50px;top:235.20px;width:44.50px;height:94.30px;background:#ffffcc;"></div>
<div class="ab" style="left:298.70px;top:235.20px;width:0.80px;height:94.30px;background:#ecedca;"></div>
<div class="ab" style="left:332.70px;top:235.20px;width:0.80px;height:94.30px;background:#ecedca;"></div>
<div class="ab" style="left:371.00px;top:235.20px;width:0.80px;height:94.30px;background:#ecedca;"></div>
<div class="ab" style="left:493.20px;top:235.20px;width:0.80px;height:94.30px;background:#ecedca;"></div>
<div class="ab" style="left:528.70px;top:235.20px;width:0.80px;height:94.30px;background:#ecedca;"></div>
<div class="ab" style="left:106.20px;top:245.85px;width:91.40px;height:0.90px;background:#ecedca;"></div>
<div class="ab" style="left:264.40px;top:245.85px;width:34.70px;height:0.90px;background:#ecedca;"></div>
<div class="ab" style="left:299.10px;top:245.85px;width:34.00px;height:0.90px;background:#ecedca;"></div>
<div class="ab" style="left:333.10px;top:245.85px;width:38.30px;height:0.90px;background:#ecedca;"></div>
<div class="ab" style="left:371.40px;top:245.85px;width:43.30px;height:0.90px;background:#ecedca;"></div>
<div class="ab" style="left:460.00px;top:245.85px;width:33.60px;height:0.90px;background:#ecedca;"></div>
<div class="ab" style="left:493.60px;top:245.85px;width:35.50px;height:0.90px;background:#ecedca;"></div>
<div class="ab" style="left:529.10px;top:245.85px;width:34.30px;height:0.90px;background:#ecedca;"></div>
<div class="ab" style="left:633.50px;top:245.85px;width:44.50px;height:0.90px;background:#ecedca;"></div>
<div class="ab" style="left:106.20px;top:256.95px;width:91.40px;height:0.90px;background:#ecedca;"></div>
<div class="ab" style="left:264.40px;top:256.95px;width:34.70px;height:0.90px;background:#ecedca;"></div>
<div class="ab" style="left:299.10px;top:256.95px;width:34.00px;height:0.90px;background:#ecedca;"></div>
<div class="ab" style="left:333.10px;top:256.95px;width:38.30px;height:0.90px;background:#ecedca;"></div>
<div class="ab" style="left:371.40px;top:256.95px;width:43.30px;height:0.90px;background:#ecedca;"></div>
<div class="ab" style="left:460.00px;top:256.95px;width:33.60px;height:0.90px;background:#ecedca;"></div>
<div class="ab" style="left:493.60px;top:256.95px;width:35.50px;height:0.90px;background:#ecedca;"></div>
<div class="ab" style="left:529.10px;top:256.95px;width:34.30px;height:0.90px;background:#ecedca;"></div>
<div class="ab" style="left:633.50px;top:256.95px;width:44.50px;height:0.90px;background:#ecedca;"></div>
<div class="ab" style="left:106.20px;top:268.05px;width:91.40px;height:0.90px;background:#ecedca;"></div>
<div class="ab" style="left:264.40px;top:268.05px;width:34.70px;height:0.90px;background:#ecedca;"></div>
<div class="ab" style="left:299.10px;top:268.05px;width:34.00px;height:0.90px;background:#ecedca;"></div>
<div class="ab" style="left:333.10px;top:268.05px;width:38.30px;height:0.90px;background:#ecedca;"></div>
<div class="ab" style="left:371.40px;top:268.05px;width:43.30px;height:0.90px;background:#ecedca;"></div>
<div class="ab" style="left:460.00px;top:268.05px;width:33.60px;height:0.90px;background:#ecedca;"></div>
<div class="ab" style="left:493.60px;top:268.05px;width:35.50px;height:0.90px;background:#ecedca;"></div>
<div class="ab" style="left:529.10px;top:268.05px;width:34.30px;height:0.90px;background:#ecedca;"></div>
<div class="ab" style="left:633.50px;top:268.05px;width:44.50px;height:0.90px;background:#ecedca;"></div>
<div class="ab" style="left:106.20px;top:279.15px;width:91.40px;height:0.90px;background:#ecedca;"></div>
<div class="ab" style="left:264.40px;top:279.15px;width:34.70px;height:0.90px;background:#ecedca;"></div>
<div class="ab" style="left:299.10px;top:279.15px;width:34.00px;height:0.90px;background:#ecedca;"></div>
<div class="ab" style="left:333.10px;top:279.15px;width:38.30px;height:0.90px;background:#ecedca;"></div>
<div class="ab" style="left:371.40px;top:279.15px;width:43.30px;height:0.90px;background:#ecedca;"></div>
<div class="ab" style="left:460.00px;top:279.15px;width:33.60px;height:0.90px;background:#ecedca;"></div>
<div class="ab" style="left:493.60px;top:279.15px;width:35.50px;height:0.90px;background:#ecedca;"></div>
<div class="ab" style="left:529.10px;top:279.15px;width:34.30px;height:0.90px;background:#ecedca;"></div>
<div class="ab" style="left:633.50px;top:279.15px;width:44.50px;height:0.90px;background:#ecedca;"></div>
<div class="ab" style="left:106.20px;top:290.25px;width:91.40px;height:0.90px;background:#ecedca;"></div>
<div class="ab" style="left:264.40px;top:290.25px;width:34.70px;height:0.90px;background:#ecedca;"></div>
<div class="ab" style="left:299.10px;top:290.25px;width:34.00px;height:0.90px;background:#ecedca;"></div>
<div class="ab" style="left:333.10px;top:290.25px;width:38.30px;height:0.90px;background:#ecedca;"></div>
<div class="ab" style="left:371.40px;top:290.25px;width:43.30px;height:0.90px;background:#ecedca;"></div>
<div class="ab" style="left:460.00px;top:290.25px;width:33.60px;height:0.90px;background:#ecedca;"></div>
<div class="ab" style="left:493.60px;top:290.25px;width:35.50px;height:0.90px;background:#ecedca;"></div>
<div class="ab" style="left:529.10px;top:290.25px;width:34.30px;height:0.90px;background:#ecedca;"></div>
<div class="ab" style="left:633.50px;top:290.25px;width:44.50px;height:0.90px;background:#ecedca;"></div>
<div class="ab" style="left:106.20px;top:301.35px;width:91.40px;height:0.90px;background:#ecedca;"></div>
<div class="ab" style="left:264.40px;top:301.35px;width:34.70px;height:0.90px;background:#ecedca;"></div>
<div class="ab" style="left:299.10px;top:301.35px;width:34.00px;height:0.90px;background:#ecedca;"></div>
<div class="ab" style="left:333.10px;top:301.35px;width:38.30px;height:0.90px;background:#ecedca;"></div>
<div class="ab" style="left:371.40px;top:301.35px;width:43.30px;height:0.90px;background:#ecedca;"></div>
<div class="ab" style="left:460.00px;top:301.35px;width:33.60px;height:0.90px;background:#ecedca;"></div>
<div class="ab" style="left:493.60px;top:301.35px;width:35.50px;height:0.90px;background:#ecedca;"></div>
<div class="ab" style="left:529.10px;top:301.35px;width:34.30px;height:0.90px;background:#ecedca;"></div>
<div class="ab" style="left:633.50px;top:301.35px;width:44.50px;height:0.90px;background:#ecedca;"></div>
<div class="ab" style="left:106.20px;top:312.45px;width:91.40px;height:0.90px;background:#ecedca;"></div>
<div class="ab" style="left:264.40px;top:312.45px;width:34.70px;height:0.90px;background:#ecedca;"></div>
<div class="ab" style="left:299.10px;top:312.45px;width:34.00px;height:0.90px;background:#ecedca;"></div>
<div class="ab" style="left:333.10px;top:312.45px;width:38.30px;height:0.90px;background:#ecedca;"></div>
<div class="ab" style="left:371.40px;top:312.45px;width:43.30px;height:0.90px;background:#ecedca;"></div>
<div class="ab" style="left:460.00px;top:312.45px;width:33.60px;height:0.90px;background:#ecedca;"></div>
<div class="ab" style="left:493.60px;top:312.45px;width:35.50px;height:0.90px;background:#ecedca;"></div>
<div class="ab" style="left:529.10px;top:312.45px;width:34.30px;height:0.90px;background:#ecedca;"></div>
<div class="ab" style="left:633.50px;top:312.45px;width:44.50px;height:0.90px;background:#ecedca;"></div>
<div class="ab" style="left:106.20px;top:323.55px;width:91.40px;height:0.90px;background:#ecedca;"></div>
<div class="ab" style="left:264.40px;top:323.55px;width:34.70px;height:0.90px;background:#ecedca;"></div>
<div class="ab" style="left:299.10px;top:323.55px;width:34.00px;height:0.90px;background:#ecedca;"></div>
<div class="ab" style="left:333.10px;top:323.55px;width:38.30px;height:0.90px;background:#ecedca;"></div>
<div class="ab" style="left:371.40px;top:323.55px;width:43.30px;height:0.90px;background:#ecedca;"></div>
<div class="ab" style="left:460.00px;top:323.55px;width:33.60px;height:0.90px;background:#ecedca;"></div>
<div class="ab" style="left:493.60px;top:323.55px;width:35.50px;height:0.90px;background:#ecedca;"></div>
<div class="ab" style="left:529.10px;top:323.55px;width:34.30px;height:0.90px;background:#ecedca;"></div>
<div class="ab" style="left:633.50px;top:323.55px;width:44.50px;height:0.90px;background:#ecedca;"></div>
<div class="t g" style="left:2.10px;top:25.82px;font-size:8.6px;color:#4f81bd">Administration</div>
<div class="t gb" style="left:2.10px;top:37.88px;font-size:6.99px;color:#1a1a1a;transform-origin:0 5.92px">Full Time Employees</div>
<div class="t g" style="left:2.10px;top:49.59px;font-size:7.45px;color:#333333">Freddie Mauer</div>
<div class="t g" style="left:107.00px;top:49.59px;font-size:7.45px;color:#333333">CEO</div>
<div class="t g" style="left:131.00px;width:200px;text-align:center;top:49.59px;font-size:7.45px;color:#333333">1/1/2001</div>
<div class="t g" style="left:169.70px;width:200px;text-align:right;top:49.59px;font-size:7.45px;color:#333333">2,080.0</div>
<div class="t g" style="left:213.00px;width:200px;text-align:right;top:49.59px;font-size:7.45px;color:#333333">95.67</div>
<div class="t g" style="left:258.30px;width:200px;text-align:right;top:49.59px;font-size:7.45px;color:#333333">199,000</div>
<div class="t g" style="left:396.80px;width:200px;text-align:right;top:49.59px;font-size:7.45px;color:#333333">95.67</div>
<div class="t g" style="left:431.80px;width:200px;text-align:right;top:49.59px;font-size:7.45px;color:#333333">199,000</div>
<div class="t g" style="left:517.50px;width:200px;text-align:right;top:49.59px;font-size:7.45px;color:#333333">16,901</div>
<div class="t g" style="left:557.90px;width:200px;text-align:right;top:49.59px;font-size:7.45px;color:#333333">15,266</div>
<div class="t g" style="left:598.60px;width:200px;text-align:right;top:49.59px;font-size:7.45px;color:#333333">16,901</div>
<div class="t g" style="left:639.40px;width:200px;text-align:right;top:49.59px;font-size:7.45px;color:#333333">16,356</div>
<div class="t g" style="left:2.10px;top:60.70px;font-size:7.45px;color:#333333">Emily Martinez</div>
<div class="t g" style="left:107.00px;top:60.70px;font-size:7.45px;color:#333333">CFO</div>
<div class="t g" style="left:131.00px;width:200px;text-align:center;top:60.70px;font-size:7.45px;color:#333333">4/12/2004</div>
<div class="t g" style="left:169.70px;width:200px;text-align:right;top:60.70px;font-size:7.45px;color:#333333">2,080.0</div>
<div class="t g" style="left:213.00px;width:200px;text-align:right;top:60.70px;font-size:7.45px;color:#333333">92.75</div>
<div class="t g" style="left:258.30px;width:200px;text-align:right;top:60.70px;font-size:7.45px;color:#333333">192,920</div>
<div class="t g" style="left:396.80px;width:200px;text-align:right;top:60.70px;font-size:7.45px;color:#333333">92.75</div>
<div class="t g" style="left:431.80px;width:200px;text-align:right;top:60.70px;font-size:7.45px;color:#333333">192,920</div>
<div class="t g" style="left:517.50px;width:200px;text-align:right;top:60.70px;font-size:7.45px;color:#333333">16,385</div>
<div class="t g" style="left:557.90px;width:200px;text-align:right;top:60.70px;font-size:7.45px;color:#333333">14,799</div>
<div class="t g" style="left:598.60px;width:200px;text-align:right;top:60.70px;font-size:7.45px;color:#333333">16,385</div>
<div class="t g" style="left:639.40px;width:200px;text-align:right;top:60.70px;font-size:7.45px;color:#333333">15,856</div>
<div class="t g" style="left:2.10px;top:71.81px;font-size:7.45px;color:#333333">Dustin McCann</div>
<div class="t g" style="left:107.00px;top:71.81px;font-size:7.45px;color:#333333">COO</div>
<div class="t g" style="left:131.00px;width:200px;text-align:center;top:71.81px;font-size:7.45px;color:#333333">7/15/2008</div>
<div class="t g" style="left:169.70px;width:200px;text-align:right;top:71.81px;font-size:7.45px;color:#333333">2,080.0</div>
<div class="t g" style="left:213.00px;width:200px;text-align:right;top:71.81px;font-size:7.45px;color:#333333">91.88</div>
<div class="t g" style="left:258.30px;width:200px;text-align:right;top:71.81px;font-size:7.45px;color:#333333">191,115</div>
<div class="t g" style="left:327.40px;width:200px;text-align:right;top:71.81px;font-size:7.45px;color:#333333">10.00%</div>
<div class="t g" style="left:396.80px;width:200px;text-align:right;top:71.81px;font-size:7.45px;color:#333333">101.07</div>
<div class="t g" style="left:431.80px;width:200px;text-align:right;top:71.81px;font-size:7.45px;color:#333333">210,227</div>
<div class="t g" style="left:555.75px;width:200px;text-align:center;top:71.81px;font-size:7.45px;color:#333333">Y</div>
<div class="t g" style="left:517.50px;width:200px;text-align:right;top:71.81px;font-size:7.45px;color:#333333">16,232</div>
<div class="t g" style="left:557.90px;width:200px;text-align:right;top:71.81px;font-size:7.45px;color:#333333">14,661</div>
<div class="t g" style="left:598.60px;width:200px;text-align:right;top:71.81px;font-size:7.45px;color:#333333">16,232</div>
<div class="t g" style="left:639.40px;width:200px;text-align:right;top:71.81px;font-size:7.45px;color:#333333">15,708</div>
<div class="t g" style="left:2.10px;top:82.91px;font-size:7.45px;color:#333333">Justin Posada</div>
<div class="t g" style="left:107.00px;top:82.91px;font-size:7.45px;color:#333333">Administrative Assistant</div>
<div class="t g" style="left:131.00px;width:200px;text-align:center;top:82.91px;font-size:7.45px;color:#333333">5/3/2008</div>
<div class="t g" style="left:169.70px;width:200px;text-align:right;top:82.91px;font-size:7.45px;color:#333333">2,080.0</div>
<div class="t g" style="left:213.00px;width:200px;text-align:right;top:82.91px;font-size:7.45px;color:#333333">26.25</div>
<div class="t g" style="left:258.30px;width:200px;text-align:right;top:82.91px;font-size:7.45px;color:#333333">54,600</div>
<div class="t g" style="left:396.80px;width:200px;text-align:right;top:82.91px;font-size:7.45px;color:#333333">26.25</div>
<div class="t g" style="left:431.80px;width:200px;text-align:right;top:82.91px;font-size:7.45px;color:#333333">54,600</div>
<div class="t g" style="left:517.50px;width:200px;text-align:right;top:82.91px;font-size:7.45px;color:#333333">4,637</div>
<div class="t g" style="left:557.90px;width:200px;text-align:right;top:82.91px;font-size:7.45px;color:#333333">4,188</div>
<div class="t g" style="left:598.60px;width:200px;text-align:right;top:82.91px;font-size:7.45px;color:#333333">4,637</div>
<div class="t g" style="left:639.40px;width:200px;text-align:right;top:82.91px;font-size:7.45px;color:#333333">4,488</div>
<div class="t g" style="left:2.10px;top:94.02px;font-size:7.45px;color:#333333">Joanne Suzuki</div>
<div class="t g" style="left:107.00px;top:94.02px;font-size:7.45px;color:#333333">Administrative Assistant</div>
<div class="t g" style="left:131.00px;width:200px;text-align:center;top:94.02px;font-size:7.45px;color:#333333">12/10/1997</div>
<div class="t g" style="left:169.70px;width:200px;text-align:right;top:94.02px;font-size:7.45px;color:#333333">2,080.0</div>
<div class="t g" style="left:213.00px;width:200px;text-align:right;top:94.02px;font-size:7.45px;color:#333333">21.88</div>
<div class="t g" style="left:258.30px;width:200px;text-align:right;top:94.02px;font-size:7.45px;color:#333333">45,515</div>
<div class="t g" style="left:396.80px;width:200px;text-align:right;top:94.02px;font-size:7.45px;color:#333333">21.88</div>
<div class="t g" style="left:431.80px;width:200px;text-align:right;top:94.02px;font-size:7.45px;color:#333333">45,515</div>
<div class="t g" style="left:517.50px;width:200px;text-align:right;top:94.02px;font-size:7.45px;color:#333333">3,866</div>
<div class="t g" style="left:557.90px;width:200px;text-align:right;top:94.02px;font-size:7.45px;color:#333333">3,492</div>
<div class="t g" style="left:598.60px;width:200px;text-align:right;top:94.02px;font-size:7.45px;color:#333333">3,866</div>
<div class="t g" style="left:639.40px;width:200px;text-align:right;top:94.02px;font-size:7.45px;color:#333333">3,741</div>
<div class="t g" style="left:2.10px;top:105.13px;font-size:7.45px;color:#333333">Chris Molina</div>
<div class="t g" style="left:107.00px;top:105.13px;font-size:7.45px;color:#333333">Administrative Assistant</div>
<div class="t g" style="left:131.00px;width:200px;text-align:center;top:105.13px;font-size:7.45px;color:#333333">7/7/2007</div>
<div class="t g" style="left:169.70px;width:200px;text-align:right;top:105.13px;font-size:7.45px;color:#333333">2,080.0</div>
<div class="t g" style="left:213.00px;width:200px;text-align:right;top:105.13px;font-size:7.45px;color:#333333">24.58</div>
<div class="t g" style="left:258.30px;width:200px;text-align:right;top:105.13px;font-size:7.45px;color:#333333">51,135</div>
<div class="t g" style="left:396.80px;width:200px;text-align:right;top:105.13px;font-size:7.45px;color:#333333">24.58</div>
<div class="t g" style="left:431.80px;width:200px;text-align:right;top:105.13px;font-size:7.45px;color:#333333">51,135</div>
<div class="t g" style="left:517.50px;width:200px;text-align:right;top:105.13px;font-size:7.45px;color:#333333">4,343</div>
<div class="t g" style="left:557.90px;width:200px;text-align:right;top:105.13px;font-size:7.45px;color:#333333">3,923</div>
<div class="t g" style="left:598.60px;width:200px;text-align:right;top:105.13px;font-size:7.45px;color:#333333">4,343</div>
<div class="t g" style="left:639.40px;width:200px;text-align:right;top:105.13px;font-size:7.45px;color:#333333">4,203</div>
<div class="t g" style="left:2.10px;top:116.24px;font-size:7.45px;color:#333333">Christine Montero</div>
<div class="t g" style="left:107.00px;top:116.24px;font-size:7.45px;color:#333333">Office Manager</div>
<div class="t g" style="left:131.00px;width:200px;text-align:center;top:116.24px;font-size:7.45px;color:#333333">6/6/2006</div>
<div class="t g" style="left:169.70px;width:200px;text-align:right;top:116.24px;font-size:7.45px;color:#333333">2,080.0</div>
<div class="t g" style="left:213.00px;width:200px;text-align:right;top:116.24px;font-size:7.45px;color:#333333">26.47</div>
<div class="t g" style="left:258.30px;width:200px;text-align:right;top:116.24px;font-size:7.45px;color:#333333">55,066</div>
<div class="t g" style="left:327.40px;width:200px;text-align:right;top:116.24px;font-size:7.45px;color:#333333">50.00%</div>
<div class="t g" style="left:396.80px;width:200px;text-align:right;top:116.24px;font-size:7.45px;color:#333333">39.71</div>
<div class="t g" style="left:431.80px;width:200px;text-align:right;top:116.24px;font-size:7.45px;color:#333333">82,599</div>
<div class="t g" style="left:517.50px;width:200px;text-align:right;top:116.24px;font-size:7.45px;color:#333333">4,677</div>
<div class="t g" style="left:557.90px;width:200px;text-align:right;top:116.24px;font-size:7.45px;color:#333333">4,224</div>
<div class="t g" style="left:598.60px;width:200px;text-align:right;top:116.24px;font-size:7.45px;color:#333333">4,677</div>
<div class="t g" style="left:639.40px;width:200px;text-align:right;top:116.24px;font-size:7.45px;color:#333333">4,526</div>
<div class="t g" style="left:2.10px;top:127.34px;font-size:7.45px;color:#333333">Luis Pierzynski</div>
<div class="t g" style="left:107.00px;top:127.34px;font-size:7.45px;color:#333333">Vice President</div>
<div class="t g" style="left:131.00px;width:200px;text-align:center;top:127.34px;font-size:7.45px;color:#333333">5/5/2005</div>
<div class="t g" style="left:169.70px;width:200px;text-align:right;top:127.34px;font-size:7.45px;color:#333333">2,080.0</div>
<div class="t g" style="left:213.00px;width:200px;text-align:right;top:127.34px;font-size:7.45px;color:#333333">84.00</div>
<div class="t g" style="left:258.30px;width:200px;text-align:right;top:127.34px;font-size:7.45px;color:#333333">174,720</div>
<div class="t g" style="left:396.80px;width:200px;text-align:right;top:127.34px;font-size:7.45px;color:#333333">84.00</div>
<div class="t g" style="left:431.80px;width:200px;text-align:right;top:127.34px;font-size:7.45px;color:#333333">174,720</div>
<div class="t g" style="left:517.50px;width:200px;text-align:right;top:127.34px;font-size:7.45px;color:#333333">14,839</div>
<div class="t g" style="left:557.90px;width:200px;text-align:right;top:127.34px;font-size:7.45px;color:#333333">13,403</div>
<div class="t g" style="left:598.60px;width:200px;text-align:right;top:127.34px;font-size:7.45px;color:#333333">14,839</div>
<div class="t g" style="left:639.40px;width:200px;text-align:right;top:127.34px;font-size:7.45px;color:#333333">14,361</div>
<div class="t g" style="left:2.10px;top:138.45px;font-size:7.45px;color:#333333">Tracy Molina</div>
<div class="t g" style="left:107.00px;top:138.45px;font-size:7.45px;color:#333333">Vice President</div>
<div class="t g" style="left:131.00px;width:200px;text-align:center;top:138.45px;font-size:7.45px;color:#333333">4/4/2004</div>
<div class="t g" style="left:169.70px;width:200px;text-align:right;top:138.45px;font-size:7.45px;color:#333333">2,080.0</div>
<div class="t g" style="left:213.00px;width:200px;text-align:right;top:138.45px;font-size:7.45px;color:#333333">83.13</div>
<div class="t g" style="left:258.30px;width:200px;text-align:right;top:138.45px;font-size:7.45px;color:#333333">172,915</div>
<div class="t g" style="left:327.40px;width:200px;text-align:right;top:138.45px;font-size:7.45px;color:#333333">-10.00%</div>
<div class="t g" style="left:396.80px;width:200px;text-align:right;top:138.45px;font-size:7.45px;color:#333333">74.82</div>
<div class="t g" style="left:431.80px;width:200px;text-align:right;top:138.45px;font-size:7.45px;color:#333333">155,624</div>
<div class="t g" style="left:517.50px;width:200px;text-align:right;top:138.45px;font-size:7.45px;color:#333333">14,686</div>
<div class="t g" style="left:557.90px;width:200px;text-align:right;top:138.45px;font-size:7.45px;color:#333333">13,265</div>
<div class="t g" style="left:598.60px;width:200px;text-align:right;top:138.45px;font-size:7.45px;color:#333333">14,686</div>
<div class="t g" style="left:639.40px;width:200px;text-align:right;top:138.45px;font-size:7.45px;color:#333333">14,212</div>
<div class="t g" style="left:396.80px;width:200px;text-align:right;top:149.56px;font-size:7.45px;color:#333333">0.00</div>
<div class="t g" style="left:431.80px;width:200px;text-align:right;top:149.56px;font-size:7.45px;color:#333333">0</div>
<div class="t g" style="left:517.50px;width:200px;text-align:right;top:149.56px;font-size:7.45px;color:#333333">0</div>
<div class="t g" style="left:557.90px;width:200px;text-align:right;top:149.56px;font-size:7.45px;color:#333333">0</div>
<div class="t g" style="left:598.60px;width:200px;text-align:right;top:149.56px;font-size:7.45px;color:#333333">0</div>
<div class="t g" style="left:639.40px;width:200px;text-align:right;top:149.56px;font-size:7.45px;color:#333333">0</div>
<div class="t g" style="left:396.80px;width:200px;text-align:right;top:160.66px;font-size:7.45px;color:#333333">0.00</div>
<div class="t g" style="left:431.80px;width:200px;text-align:right;top:160.66px;font-size:7.45px;color:#333333">0</div>
<div class="t g" style="left:517.50px;width:200px;text-align:right;top:160.66px;font-size:7.45px;color:#333333">0</div>
<div class="t g" style="left:557.90px;width:200px;text-align:right;top:160.66px;font-size:7.45px;color:#333333">0</div>
<div class="t g" style="left:598.60px;width:200px;text-align:right;top:160.66px;font-size:7.45px;color:#333333">0</div>
<div class="t g" style="left:639.40px;width:200px;text-align:right;top:160.66px;font-size:7.45px;color:#333333">0</div>
<div class="t g" style="left:396.80px;width:200px;text-align:right;top:171.77px;font-size:7.45px;color:#333333">0.00</div>
<div class="t g" style="left:431.80px;width:200px;text-align:right;top:171.77px;font-size:7.45px;color:#333333">0</div>
<div class="t g" style="left:517.50px;width:200px;text-align:right;top:171.77px;font-size:7.45px;color:#333333">0</div>
<div class="t g" style="left:557.90px;width:200px;text-align:right;top:171.77px;font-size:7.45px;color:#333333">0</div>
<div class="t g" style="left:598.60px;width:200px;text-align:right;top:171.77px;font-size:7.45px;color:#333333">0</div>
<div class="t g" style="left:639.40px;width:200px;text-align:right;top:171.77px;font-size:7.45px;color:#333333">0</div>
<div class="t g" style="left:396.80px;width:200px;text-align:right;top:182.88px;font-size:7.45px;color:#333333">0.00</div>
<div class="t g" style="left:431.80px;width:200px;text-align:right;top:182.88px;font-size:7.45px;color:#333333">0</div>
<div class="t g" style="left:517.50px;width:200px;text-align:right;top:182.88px;font-size:7.45px;color:#333333">0</div>
<div class="t g" style="left:557.90px;width:200px;text-align:right;top:182.88px;font-size:7.45px;color:#333333">0</div>
<div class="t g" style="left:598.60px;width:200px;text-align:right;top:182.88px;font-size:7.45px;color:#333333">0</div>
<div class="t g" style="left:639.40px;width:200px;text-align:right;top:182.88px;font-size:7.45px;color:#333333">0</div>
<div class="t g" style="left:396.80px;width:200px;text-align:right;top:193.98px;font-size:7.45px;color:#333333">0.00</div>
<div class="t g" style="left:431.80px;width:200px;text-align:right;top:193.98px;font-size:7.45px;color:#333333">0</div>
<div class="t g" style="left:517.50px;width:200px;text-align:right;top:193.98px;font-size:7.45px;color:#333333">0</div>
<div class="t g" style="left:557.90px;width:200px;text-align:right;top:193.98px;font-size:7.45px;color:#333333">0</div>
<div class="t g" style="left:598.60px;width:200px;text-align:right;top:193.98px;font-size:7.45px;color:#333333">0</div>
<div class="t g" style="left:639.40px;width:200px;text-align:right;top:193.98px;font-size:7.45px;color:#333333">0</div>
<div class="t g" style="left:600.10px;top:210.18px;font-size:7.35px;color:#333333">Total Full Time</div>
<div class="t g" style="left:517.50px;width:200px;text-align:right;top:210.09px;font-size:7.45px;color:#333333">96,566</div>
<div class="t g" style="left:557.90px;width:200px;text-align:right;top:210.09px;font-size:7.45px;color:#333333">87,221</div>
<div class="t g" style="left:598.60px;width:200px;text-align:right;top:210.09px;font-size:7.45px;color:#333333">96,566</div>
<div class="t g" style="left:639.40px;width:200px;text-align:right;top:210.09px;font-size:7.45px;color:#333333">93,451</div>
<div class="t gb" style="left:2.10px;top:226.28px;font-size:6.99px;color:#1a1a1a;transform-origin:0 5.92px">Part Time Employees</div>
<div class="t g" style="left:2.10px;top:237.99px;font-size:7.45px;color:#333333">Chris Martin</div>
<div class="t g" style="left:107.00px;top:237.99px;font-size:7.45px;color:#333333">Receptionist</div>
<div class="t g" style="left:131.00px;width:200px;text-align:center;top:237.99px;font-size:7.45px;color:#333333">4/12/2004</div>
<div class="t g" style="left:169.70px;width:200px;text-align:right;top:237.99px;font-size:7.45px;color:#333333">2,080.0</div>
<div class="t g" style="left:213.00px;width:200px;text-align:right;top:237.99px;font-size:7.45px;color:#333333">15.00</div>
<div class="t g" style="left:258.30px;width:200px;text-align:right;top:237.99px;font-size:7.45px;color:#333333">31,200.00</div>
<div class="t g" style="left:396.80px;width:200px;text-align:right;top:237.99px;font-size:7.45px;color:#333333">15.00</div>
<div class="t g" style="left:431.80px;width:200px;text-align:right;top:237.99px;font-size:7.45px;color:#333333">31,200</div>
<div class="t g" style="left:517.50px;width:200px;text-align:right;top:237.99px;font-size:7.45px;color:#333333">2,650</div>
<div class="t g" style="left:557.90px;width:200px;text-align:right;top:237.99px;font-size:7.45px;color:#333333">2,393</div>
<div class="t g" style="left:598.60px;width:200px;text-align:right;top:237.99px;font-size:7.45px;color:#333333">2,650</div>
<div class="t g" style="left:639.40px;width:200px;text-align:right;top:237.99px;font-size:7.45px;color:#333333">2,564</div>
<div class="t g" style="left:2.10px;top:249.09px;font-size:7.45px;color:#333333">Sophia Baker</div>
<div class="t g" style="left:107.00px;top:249.09px;font-size:7.45px;color:#333333">Office Manager</div>
<div class="t g" style="left:131.00px;width:200px;text-align:center;top:249.09px;font-size:7.45px;color:#333333">7/15/2008</div>
<div class="t g" style="left:169.70px;width:200px;text-align:right;top:249.09px;font-size:7.45px;color:#333333">2,080.0</div>
<div class="t g" style="left:213.00px;width:200px;text-align:right;top:249.09px;font-size:7.45px;color:#333333">17.00</div>
<div class="t g" style="left:258.30px;width:200px;text-align:right;top:249.09px;font-size:7.45px;color:#333333">35,360.00</div>
<div class="t g" style="left:327.40px;width:200px;text-align:right;top:249.09px;font-size:7.45px;color:#333333">20.00%</div>
<div class="t g" style="left:396.80px;width:200px;text-align:right;top:249.09px;font-size:7.45px;color:#333333">20.40</div>
<div class="t g" style="left:431.80px;width:200px;text-align:right;top:249.09px;font-size:7.45px;color:#333333">42,432</div>
<div class="t g" style="left:555.75px;width:200px;text-align:center;top:249.09px;font-size:7.45px;color:#333333">N</div>
<div class="t g" style="left:517.50px;width:200px;text-align:right;top:249.09px;font-size:7.45px;color:#333333">3,003</div>
<div class="t g" style="left:557.90px;width:200px;text-align:right;top:249.09px;font-size:7.45px;color:#333333">2,713</div>
<div class="t g" style="left:598.60px;width:200px;text-align:right;top:249.09px;font-size:7.45px;color:#333333">3,003</div>
<div class="t g" style="left:639.40px;width:200px;text-align:right;top:249.09px;font-size:7.45px;color:#333333">2,906</div>
<div class="t g" style="left:2.10px;top:260.19px;font-size:7.45px;color:#333333">Clint Doumit</div>
<div class="t g" style="left:107.00px;top:260.19px;font-size:7.45px;color:#333333">Receptionist</div>
<div class="t g" style="left:131.00px;width:200px;text-align:center;top:260.19px;font-size:7.45px;color:#333333">5/3/2008</div>
<div class="t g" style="left:169.70px;width:200px;text-align:right;top:260.19px;font-size:7.45px;color:#333333">2,080.0</div>
<div class="t g" style="left:213.00px;width:200px;text-align:right;top:260.19px;font-size:7.45px;color:#333333">18.00</div>
<div class="t g" style="left:258.30px;width:200px;text-align:right;top:260.19px;font-size:7.45px;color:#333333">37,440.00</div>
<div class="t g" style="left:396.80px;width:200px;text-align:right;top:260.19px;font-size:7.45px;color:#333333">18.00</div>
<div class="t g" style="left:431.80px;width:200px;text-align:right;top:260.19px;font-size:7.45px;color:#333333">37,440</div>
<div class="t g" style="left:517.50px;width:200px;text-align:right;top:260.19px;font-size:7.45px;color:#333333">3,180</div>
<div class="t g" style="left:557.90px;width:200px;text-align:right;top:260.19px;font-size:7.45px;color:#333333">2,872</div>
<div class="t g" style="left:598.60px;width:200px;text-align:right;top:260.19px;font-size:7.45px;color:#333333">3,180</div>
<div class="t g" style="left:639.40px;width:200px;text-align:right;top:260.19px;font-size:7.45px;color:#333333">3,077</div>
<div class="t g" style="left:2.10px;top:271.29px;font-size:7.45px;color:#333333">Orlando Iannetta</div>
<div class="t g" style="left:107.00px;top:271.29px;font-size:7.45px;color:#333333">Contractor</div>
<div class="t g" style="left:131.00px;width:200px;text-align:center;top:271.29px;font-size:7.45px;color:#333333">12/10/1997</div>
<div class="t g" style="left:169.70px;width:200px;text-align:right;top:271.29px;font-size:7.45px;color:#333333">2,080.0</div>
<div class="t g" style="left:213.00px;width:200px;text-align:right;top:271.29px;font-size:7.45px;color:#333333">20.00</div>
<div class="t g" style="left:258.30px;width:200px;text-align:right;top:271.29px;font-size:7.45px;color:#333333">41,600.00</div>
<div class="t g" style="left:396.80px;width:200px;text-align:right;top:271.29px;font-size:7.45px;color:#333333">20.00</div>
<div class="t g" style="left:431.80px;width:200px;text-align:right;top:271.29px;font-size:7.45px;color:#333333">41,600</div>
<div class="t g" style="left:517.50px;width:200px;text-align:right;top:271.29px;font-size:7.45px;color:#333333">3,533</div>
<div class="t g" style="left:557.90px;width:200px;text-align:right;top:271.29px;font-size:7.45px;color:#333333">3,191</div>
<div class="t g" style="left:598.60px;width:200px;text-align:right;top:271.29px;font-size:7.45px;color:#333333">3,533</div>
<div class="t g" style="left:639.40px;width:200px;text-align:right;top:271.29px;font-size:7.45px;color:#333333">3,419</div>
<div class="t g" style="left:258.30px;width:200px;text-align:right;top:282.39px;font-size:7.45px;color:#333333">0.00</div>
<div class="t g" style="left:396.80px;width:200px;text-align:right;top:282.39px;font-size:7.45px;color:#333333">0.00</div>
<div class="t g" style="left:431.80px;width:200px;text-align:right;top:282.39px;font-size:7.45px;color:#333333">0</div>
<div class="t g" style="left:517.50px;width:200px;text-align:right;top:282.39px;font-size:7.45px;color:#333333">0</div>
<div class="t g" style="left:557.90px;width:200px;text-align:right;top:282.39px;font-size:7.45px;color:#333333">0</div>
<div class="t g" style="left:598.60px;width:200px;text-align:right;top:282.39px;font-size:7.45px;color:#333333">0</div>
<div class="t g" style="left:639.40px;width:200px;text-align:right;top:282.39px;font-size:7.45px;color:#333333">0</div>
<div class="t g" style="left:258.30px;width:200px;text-align:right;top:293.49px;font-size:7.45px;color:#333333">0.00</div>
<div class="t g" style="left:396.80px;width:200px;text-align:right;top:293.49px;font-size:7.45px;color:#333333">0.00</div>
<div class="t g" style="left:431.80px;width:200px;text-align:right;top:293.49px;font-size:7.45px;color:#333333">0</div>
<div class="t g" style="left:517.50px;width:200px;text-align:right;top:293.49px;font-size:7.45px;color:#333333">0</div>
<div class="t g" style="left:557.90px;width:200px;text-align:right;top:293.49px;font-size:7.45px;color:#333333">0</div>
<div class="t g" style="left:598.60px;width:200px;text-align:right;top:293.49px;font-size:7.45px;color:#333333">0</div>
<div class="t g" style="left:639.40px;width:200px;text-align:right;top:293.49px;font-size:7.45px;color:#333333">0</div>
<div class="t g" style="left:258.30px;width:200px;text-align:right;top:304.59px;font-size:7.45px;color:#333333">0.00</div>
<div class="t g" style="left:396.80px;width:200px;text-align:right;top:304.59px;font-size:7.45px;color:#333333">0.00</div>
<div class="t g" style="left:431.80px;width:200px;text-align:right;top:304.59px;font-size:7.45px;color:#333333">0</div>
<div class="t g" style="left:517.50px;width:200px;text-align:right;top:304.59px;font-size:7.45px;color:#333333">0</div>
<div class="t g" style="left:557.90px;width:200px;text-align:right;top:304.59px;font-size:7.45px;color:#333333">0</div>
<div class="t g" style="left:598.60px;width:200px;text-align:right;top:304.59px;font-size:7.45px;color:#333333">0</div>
<div class="t g" style="left:639.40px;width:200px;text-align:right;top:304.59px;font-size:7.45px;color:#333333">0</div>
<div class="t g" style="left:258.30px;width:200px;text-align:right;top:315.69px;font-size:7.45px;color:#333333">0.00</div>
<div class="t g" style="left:396.80px;width:200px;text-align:right;top:315.69px;font-size:7.45px;color:#333333">0.00</div>
<div class="t g" style="left:431.80px;width:200px;text-align:right;top:315.69px;font-size:7.45px;color:#333333">0</div>
<div class="t g" style="left:517.50px;width:200px;text-align:right;top:315.69px;font-size:7.45px;color:#333333">0</div>
<div class="t g" style="left:557.90px;width:200px;text-align:right;top:315.69px;font-size:7.45px;color:#333333">0</div>
<div class="t g" style="left:598.60px;width:200px;text-align:right;top:315.69px;font-size:7.45px;color:#333333">0</div>
<div class="t g" style="left:639.40px;width:200px;text-align:right;top:315.69px;font-size:7.45px;color:#333333">0</div>
<div class="t g" style="left:258.30px;width:200px;text-align:right;top:326.79px;font-size:7.45px;color:#333333">0.00</div>
<div class="t g" style="left:396.80px;width:200px;text-align:right;top:326.79px;font-size:7.45px;color:#333333">0.00</div>
<div class="t g" style="left:431.80px;width:200px;text-align:right;top:326.79px;font-size:7.45px;color:#333333">0</div>
<div class="t g" style="left:517.50px;width:200px;text-align:right;top:326.79px;font-size:7.45px;color:#333333">0</div>
<div class="t g" style="left:557.90px;width:200px;text-align:right;top:326.79px;font-size:7.45px;color:#333333">0</div>
<div class="t g" style="left:598.60px;width:200px;text-align:right;top:326.79px;font-size:7.45px;color:#333333">0</div>
<div class="t g" style="left:639.40px;width:200px;text-align:right;top:326.79px;font-size:7.45px;color:#333333">0</div>
</div>
<div class="ab" style="left:925px;top:106.4px;width:11.8px;height:384px;background:linear-gradient(to right,#e6e6e6,#dcdcdc);border-left:0.8px solid #c4c4c4"></div>
<div class="ab" style="left:927.4px;top:107.4px;width:8.2px;height:8.2px;background:#fff;border:0.6px solid #c8c8c8"></div>
<svg style="left:929.5px;top:109.8px" width="4" height="3" viewBox="0 0 4 3"><polygon points="0,2.6 2,0.4 4,2.6" fill="#555"/></svg>
<div class="ab" style="left:927.4px;top:116px;width:8.2px;height:65px;background:#fff;border:0.6px solid #c8c8c8"></div>
<div class="ab" style="left:927.4px;top:482.2px;width:8.2px;height:8px;background:#fff;border:0.6px solid #c8c8c8"></div>
<svg style="left:929.5px;top:485px" width="4" height="3" viewBox="0 0 4 3"><polygon points="0,0.4 2,2.6 4,0.4" fill="#555"/></svg>
<div class="ab" style="left:68.8px;top:490.3px;width:868px;height:14.9px;background:#e6e6e6;border-top:0.6px solid #cfcfcf"></div>
<svg style="left:83px;top:495px" width="4" height="5" viewBox="0 0 4 5"><polyline points="3,0.5 1,2.5 3,4.5" fill="none" stroke="#c4c4c4" stroke-width="0.8"/></svg>
<svg style="left:98.4px;top:495px" width="4" height="5" viewBox="0 0 4 5"><polyline points="1,0.5 3,2.5 1,4.5" fill="none" stroke="#c4c4c4" stroke-width="0.8"/></svg>
<div class="ab" style="left:124.2px;top:490.3px;width:38.3px;height:14.4px;background:#fff;border-bottom:1.3px solid #217346;border-left:0.6px solid #d0d0d0;border-right:0.6px solid #d0d0d0"></div>
<div class="t" style="left:131.60px;top:494.36px;font-size:7.02px;color:#217346;font-weight:bold;">Payroll</div>
<div class="t" style="left:169.00px;top:494.02px;font-size:7.42px;color:#666;font-weight:normal;">Directions</div>
<div class="ab" style="left:211.3px;top:492.5px;width:0.7px;height:10px;background:#b8b8b8"></div>
<div class="ab" style="left:580px;top:493.8px;width:345px;height:9.4px;background:#dedede"></div>
<div class="ab" style="left:574px;top:494.8px;width:0.8px;height:1.2px;background:#aaa"></div>
<div class="ab" style="left:574px;top:497.2px;width:0.8px;height:1.2px;background:#aaa"></div>
<div class="ab" style="left:574px;top:499.6px;width:0.8px;height:1.2px;background:#aaa"></div>
<div class="ab" style="left:582.4px;top:494.7px;width:36.2px;height:7.8px;background:#fff;border:0.6px solid #bdbdbd"></div>
<div class="ab" style="left:590px;top:494.7px;width:0.6px;height:7.8px;background:#bdbdbd"></div>
<svg style="left:585px;top:496.8px" width="3" height="4" viewBox="0 0 3 4"><polygon points="2.6,0 0.4,2 2.6,4" fill="#444"/></svg>
<div class="ab" style="left:916.9px;top:495px;width:7.8px;height:7.6px;background:#fff;border:0.6px solid #bdbdbd"></div>
<svg style="left:919.8px;top:497px" width="3" height="4" viewBox="0 0 3 4"><polygon points="0.4,0 2.6,2 0.4,4" fill="#444"/></svg>
<div class="ab" style="left:68.8px;top:505.5px;width:868px;height:15.8px;background:#2f3744;box-shadow:0 1px 2px rgba(0,0,0,0.18)"></div>
<div class="t" style="left:434.10px;top:510.26px;font-size:8.67px;color:#e8e8e8;font-weight:normal;">Spreading and Line item details</div>
<svg style="left:560.8px;top:511.6px" width="8" height="5" viewBox="0 0 8 5"><polyline points="1,4.2 4,1.2 7,4.2" fill="none" stroke="#fff" stroke-width="1.5"/></svg>
</div></div>
<div class="ab" style="left:0;top:0;width:950px;height:535px;border-radius:13px;box-shadow:inset 0 0 0 2.2px #b3b3b3"></div>
</body></html>
